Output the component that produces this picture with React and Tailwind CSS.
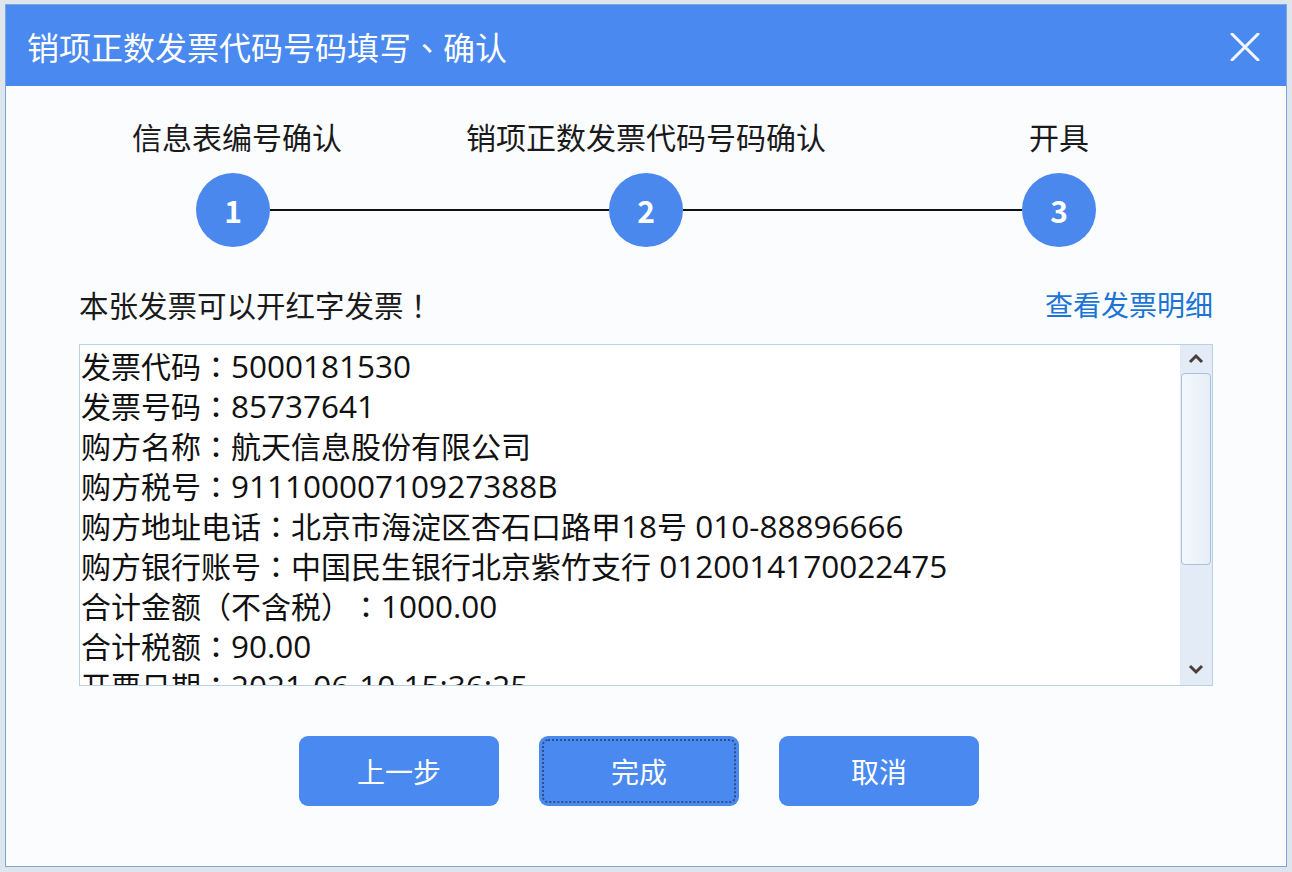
import React from "react";

const steps = [
  { n: "1", label: "信息表编号确认", shift: "ml-[8px]" },
  { n: "2", label: "销项正数发票代码号码确认", shift: "" },
  { n: "3", label: "开具", shift: "" },
];

const lines = [
  "发票代码：5000181530",
  "发票号码：85737641",
  "购方名称：航天信息股份有限公司",
  "购方税号：91110000710927388B",
  "购方地址电话：北京市海淀区杏石口路甲18号 010-88896666",
  "购方银行账号：中国民生银行北京紫竹支行 0120014170022475",
  "合计金额（不含税）：1000.00",
  "合计税额：90.00",
  "开票日期：2021-06-10 15:36:25",
];

// full-width punctuation centred (TC face), latin runs in a wider face
const Rich = ({ text }) =>
  text.split(/([：！（）]|[\x20-\x7E]+)/).map((part, i) => {
    if (!part) return null;
    if (/^[：！（）]$/.test(part))
      return (
        <span key={i} className="font-['Noto_Sans_CJK_TC',sans-serif]">
          {part}
        </span>
      );
    if (/^[\x20-\x7E]+$/.test(part))
      return (
        <span key={i} className="font-['Open_Sans',sans-serif] text-[31.5px]">
          {part}
        </span>
      );
    return <span key={i}>{part}</span>;
  });

const Step = ({ n, label, shift }) => (
  <div className="flex w-[74px] flex-col items-center">
    <div className={`whitespace-nowrap text-[30px] leading-[40px] text-[#1a1a1a] ${shift}`}>{label}</div>
    <div className="mt-[17px] flex h-[74px] w-[74px] items-center justify-center rounded-full bg-[#4a88ee] text-[30px] font-bold text-white">
      {n}
    </div>
  </div>
);

const Button = ({ children, focused }) => (
  <button className="relative flex h-[70px] w-[200px] items-center justify-center rounded-[9px] bg-[#4a89ef] text-[28px] text-white">
    {focused && (
      <span className="absolute inset-[3px] rounded-[6px] border-2 border-dotted border-[#2d4f86]" />
    )}
    {children}
  </button>
);

export default function App() {
  return (
    <div className="h-[872px] w-[1292px] overflow-hidden bg-[#dfe5ec] px-[5px] pt-[4px] font-['Noto_Sans_CJK_SC',sans-serif] [text-spacing-trim:space-all]">
      <div className="flex h-[863px] flex-col border border-[#7fa6dc] bg-[#fbfcfe]">
        {/* title bar */}
        <div className="flex h-[81px] shrink-0 items-center justify-between bg-[#4a89ef] pl-[21px] pr-[26px]">
          <span className="text-[32px] leading-[40px] text-white">
            销项正数发票代码号码填写<span className="font-['Noto_Sans_CJK_TC',sans-serif]">、</span>确认
          </span>
          <svg width="30" height="28" viewBox="0 0 30 28" className="mt-[2px]">
            <path d="M2 1 L28 27 M28 1 L2 27" stroke="#f2f6fd" strokeWidth="3" strokeLinecap="round" />
          </svg>
        </div>

        {/* steps */}
        <div className="mt-[30px] flex items-end px-[190px]">
          <Step {...steps[0]} />
          <div className="mb-[36px] h-[2px] flex-1 bg-[#111]" />
          <Step {...steps[1]} />
          <div className="mb-[36px] h-[2px] flex-1 bg-[#111]" />
          <Step {...steps[2]} />
        </div>

        {/* status row */}
        <div className="mt-[37px] flex items-center justify-between px-[73px] leading-[40px]">
          <span className="text-[29.5px] text-[#1a1a1a]">
            <Rich text="本张发票可以开红字发票！" />
          </span>
          <span className="text-[28px] text-[#1b74d6]">查看发票明细</span>
        </div>

        {/* detail box */}
        <div className="mx-[73px] mt-[20px] flex h-[342px] border border-[#b9d0e6] bg-white">
          <div className="flex-1 overflow-hidden pl-[1px]">
            {lines.map((l) => (
              <div key={l} className="h-[40px] whitespace-nowrap text-[30px] leading-[40px] text-[#111]">
                <Rich text={l} />
              </div>
            ))}
          </div>
          <div className="flex w-[32px] flex-col items-center bg-[#e3ecf6] py-[6px]">
            <svg width="18" height="12" viewBox="0 0 18 12" className="mt-[2px]">
              <path d="M3 9 L9 3 L15 9" stroke="#4a3f38" strokeWidth="3" fill="none" />
            </svg>
            <div className="mt-[8px] h-[192px] w-[30px] rounded-[4px] border border-[#a8c2dc] bg-gradient-to-r from-[#f4f8fc] to-[#e6eef7]" />
            <div className="flex-1" />
            <svg width="18" height="12" viewBox="0 0 18 12" className="mb-[4px]">
              <path d="M3 3 L9 9 L15 3" stroke="#4a3f38" strokeWidth="3" fill="none" />
            </svg>
          </div>
        </div>

        {/* buttons */}
        <div className="mt-[50px] flex justify-center gap-[40px] pr-[14px]">
          <Button>上一步</Button>
          <Button focused>完成</Button>
          <Button>取消</Button>
        </div>
      </div>
    </div>
  );
}
